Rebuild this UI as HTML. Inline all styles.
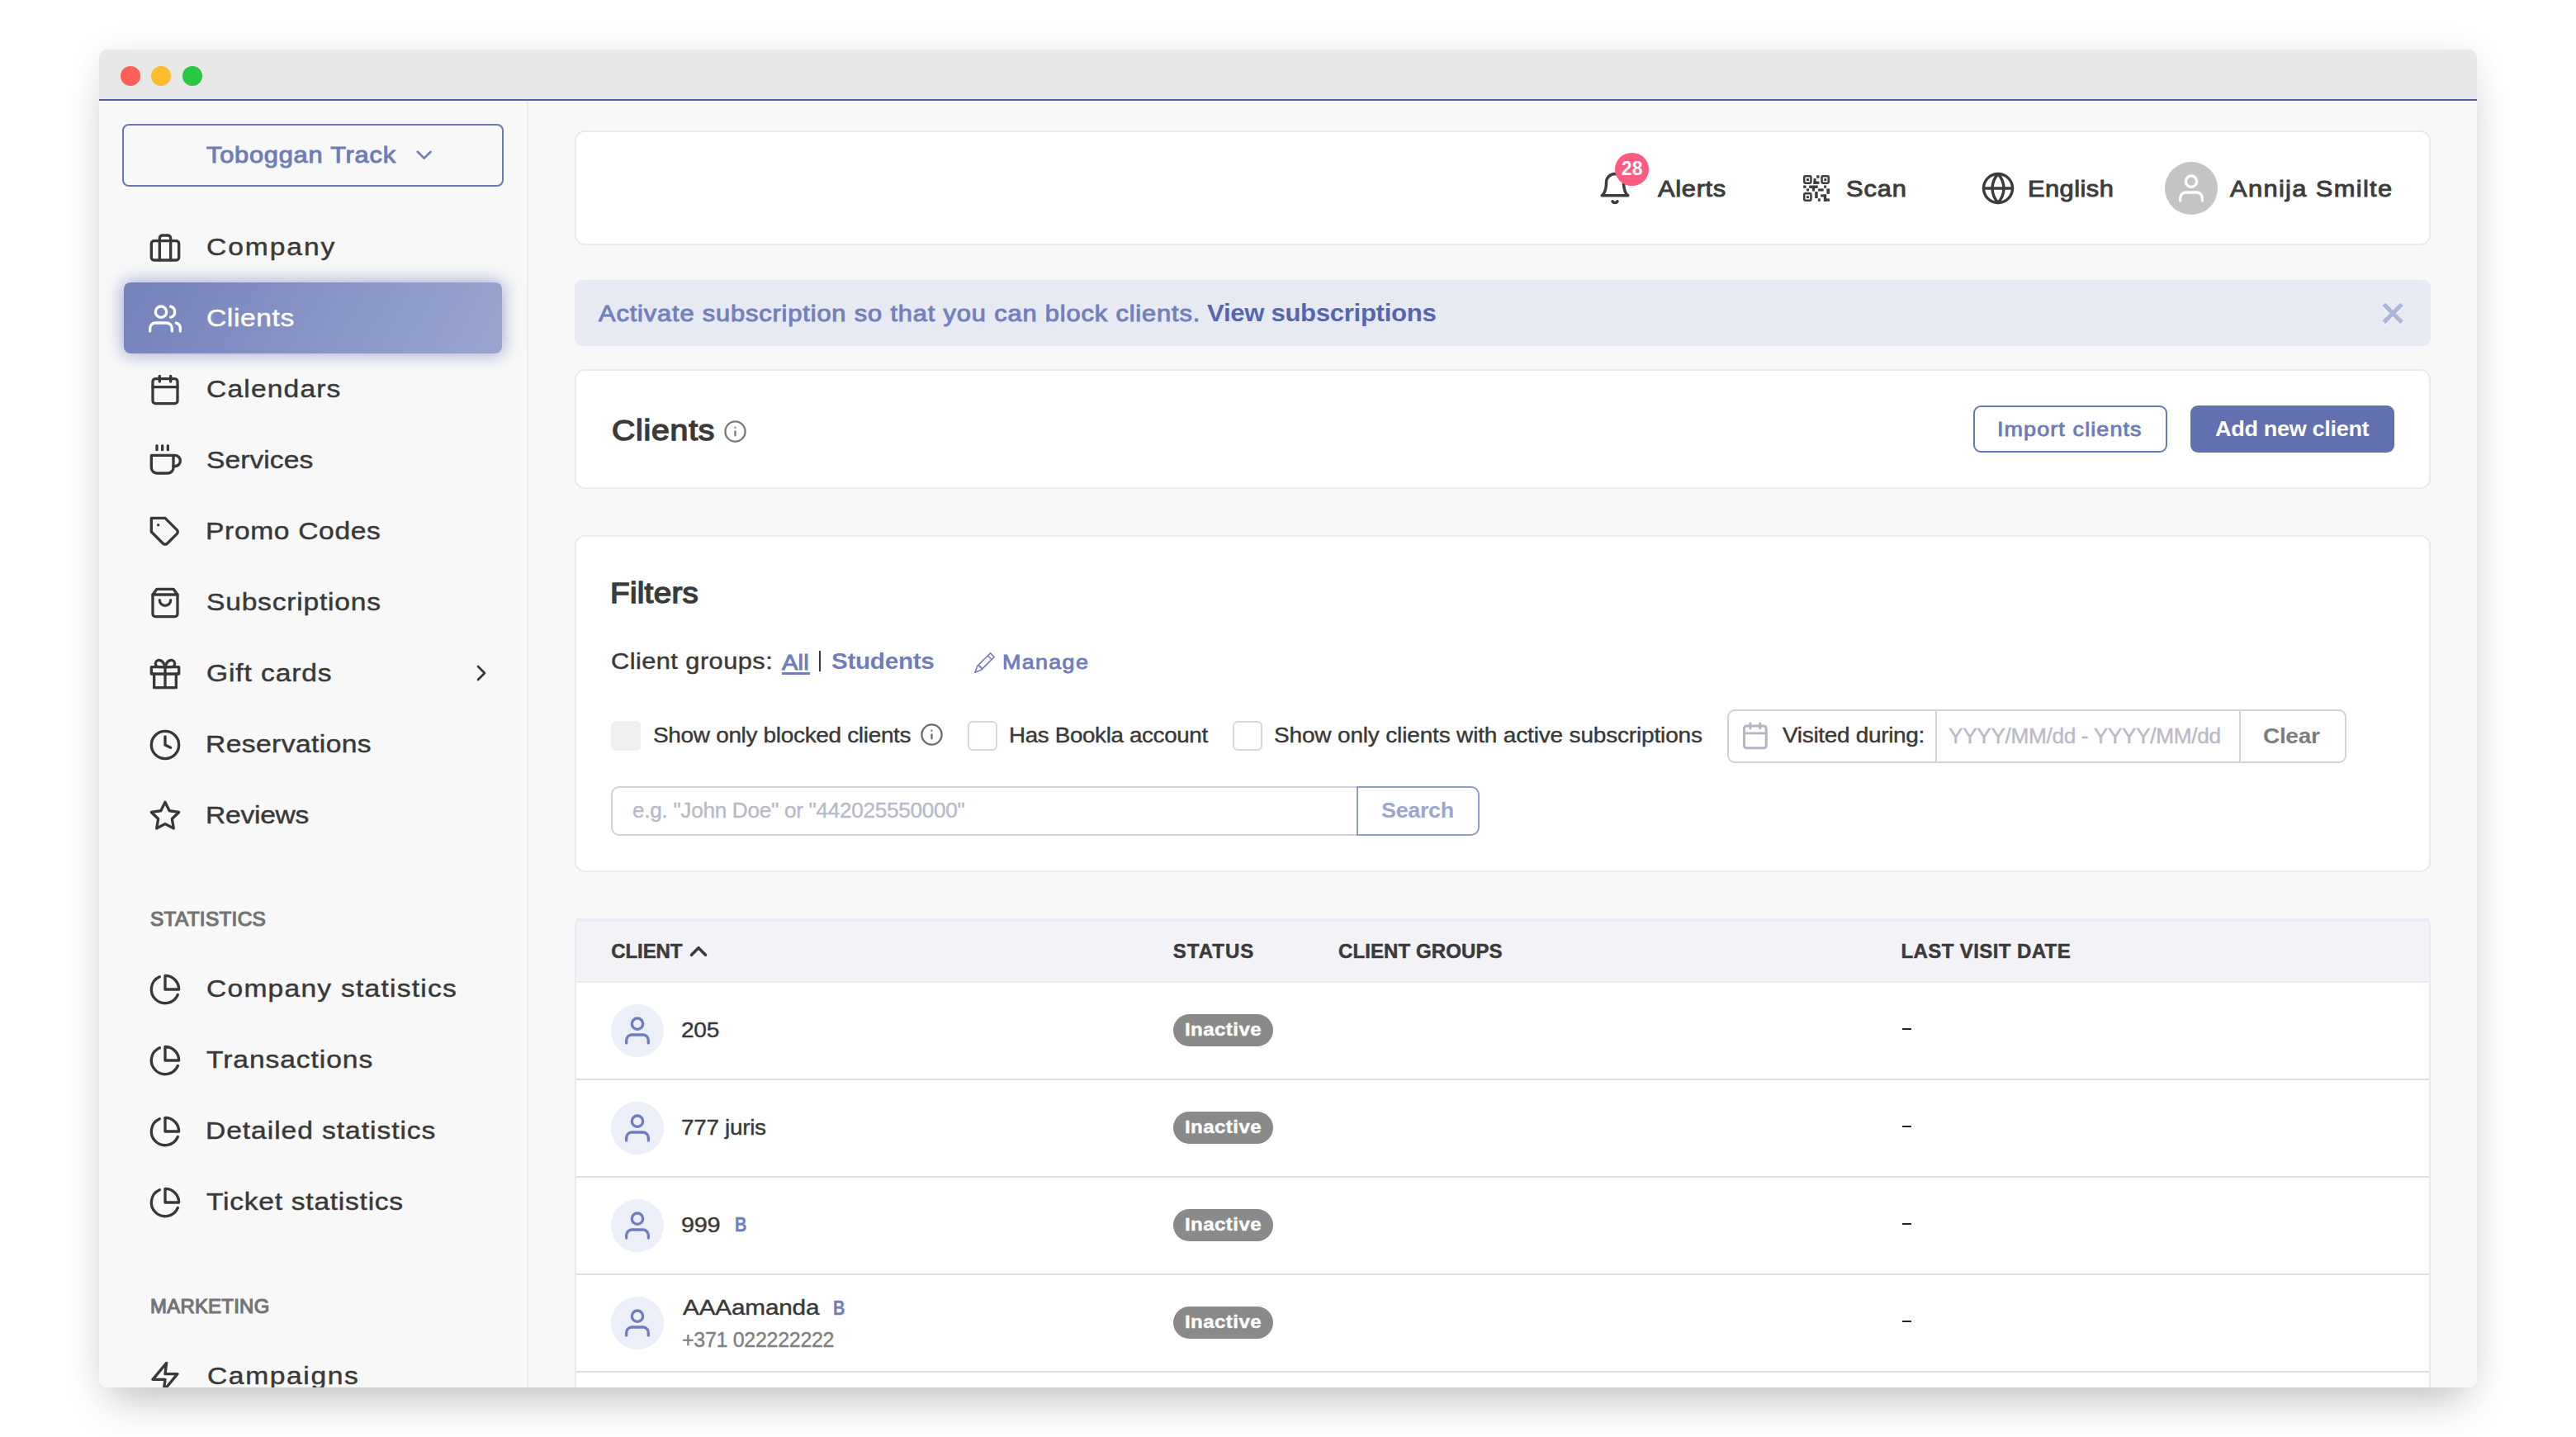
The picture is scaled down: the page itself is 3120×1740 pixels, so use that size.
<!DOCTYPE html>
<html><head><meta charset="utf-8"><title>Clients</title>
<style>
html,body{margin:0;padding:0;}
body{width:3120px;height:1740px;overflow:hidden;background:#fff;position:relative;font-family:"Liberation Sans",sans-serif;}
#shadow{position:absolute;left:120px;top:60px;width:2880px;height:1620px;border-radius:9px;background:#f8f8f8;box-shadow:0 30px 50px -14px rgba(0,0,0,.21),0 0 40px rgba(0,0,0,.065);}
#win{position:absolute;left:120px;top:60px;width:2880px;height:62px;border-radius:9px 9px 0 0;overflow:hidden;}
#win .b{position:absolute;}
.b{position:absolute;}
.i{position:absolute;overflow:visible;}
.t{position:absolute;white-space:pre;line-height:1;transform-origin:0 0;display:block;}
#clip{position:absolute;left:120px;top:60px;width:2880px;height:1620px;border-radius:9px;overflow:hidden;}
#clip > #inner{position:absolute;left:-120px;top:-60px;width:3120px;height:1740px;}
</style></head><body>
<div id="shadow"></div>
<div id="clip"><div id="inner">
<div id="win">
<div class="b" style="left:0px;top:0px;width:2880px;height:60px;background:#e8e8e8;"></div>
<div class="b" style="left:0px;top:60px;width:2880px;height:2px;background:#4f5cb0;"></div>
<div class="b" style="left:25.5px;top:20px;width:24px;height:24px;background:#fe5f57;border-radius:50%;"></div>
<div class="b" style="left:63.2px;top:20px;width:24px;height:24px;background:#febc2e;border-radius:50%;"></div>
<div class="b" style="left:100.9px;top:20px;width:24px;height:24px;background:#28c840;border-radius:50%;"></div>
</div>
<div class="b" style="left:638px;top:122px;width:2px;height:1558px;background:#ebeaf4;"></div>
<div class="b" style="left:148px;top:150px;width:462px;height:76px;border:2px solid #6b78b7;border-radius:8px;box-sizing:border-box;"></div>
<span class="t" style="left:250.1px;top:173.7px;font-size:27.5px;font-weight:400;color:#6e7cb8;letter-spacing:0.68px;transform:scaleX(1.1200);-webkit-text-stroke:0.94px #6e7cb8;">Toboggan Track</span>
<svg class="i" style="left:498.3px;top:172.4px;" width="31.4" height="31.4" viewBox="0 0 24 24" fill="none" stroke="#6e7cb8" stroke-width="2" stroke-linecap="round" stroke-linejoin="round"><polyline points="6 9 12 15 18 9"/></svg>
<svg class="i" style="left:180px;top:280.0px;" width="40" height="40" viewBox="0 0 24 24" fill="none" stroke="#383838" stroke-width="2" stroke-linecap="round" stroke-linejoin="round"><rect x="2" y="7" width="20" height="14" rx="2" ry="2"/><path d="M16 21V5a2 2 0 0 0-2-2h-4a2 2 0 0 0-2 2v16"/></svg>
<span class="t" style="left:250.0px;top:284.1px;font-size:30px;font-weight:400;color:#383838;letter-spacing:1.72px;transform:scaleX(1.1200);-webkit-text-stroke:0.45px #383838;">Company</span>
<div class="b" style="left:150px;top:342px;width:458px;height:86px;border-radius:8px;background:linear-gradient(118deg,#7481bb,#9aa5cf);box-shadow:0 0 20px 2px rgba(110,123,184,.6);"></div>
<svg class="i" style="left:180px;top:366.0px;" width="40" height="40" viewBox="0 0 24 24" fill="none" stroke="#fff" stroke-width="2" stroke-linecap="round" stroke-linejoin="round"><path d="M17 21v-2a4 4 0 0 0-4-4H5a4 4 0 0 0-4 4v2"/><circle cx="9" cy="7" r="4"/><path d="M23 21v-2a4 4 0 0 0-3-3.87"/><path d="M16 3.13a4 4 0 0 1 0 7.75"/></svg>
<span class="t" style="left:250.0px;top:370.1px;font-size:30px;font-weight:400;color:#fff;letter-spacing:0.54px;transform:scaleX(1.1200);-webkit-text-stroke:0.45px #fff;">Clients</span>
<svg class="i" style="left:180px;top:452.0px;" width="40" height="40" viewBox="0 0 24 24" fill="none" stroke="#383838" stroke-width="2" stroke-linecap="round" stroke-linejoin="round"><rect x="3" y="4" width="18" height="18" rx="2" ry="2"/><line x1="16" y1="2" x2="16" y2="6"/><line x1="8" y1="2" x2="8" y2="6"/><line x1="3" y1="10" x2="21" y2="10"/></svg>
<span class="t" style="left:250.0px;top:456.1px;font-size:30px;font-weight:400;color:#383838;letter-spacing:1.03px;transform:scaleX(1.1200);-webkit-text-stroke:0.45px #383838;">Calendars</span>
<svg class="i" style="left:180px;top:538.0px;" width="40" height="40" viewBox="0 0 24 24" fill="none" stroke="#383838" stroke-width="2" stroke-linecap="round" stroke-linejoin="round"><path d="M18 8h1a4 4 0 0 1 0 8h-1"/><path d="M2 8h16v9a4 4 0 0 1-4 4H6a4 4 0 0 1-4-4V8z"/><line x1="6" y1="1" x2="6" y2="4"/><line x1="10" y1="1" x2="10" y2="4"/><line x1="14" y1="1" x2="14" y2="4"/></svg>
<span class="t" style="left:250.0px;top:542.1px;font-size:30px;font-weight:400;color:#383838;letter-spacing:0.05px;transform:scaleX(1.1200);-webkit-text-stroke:0.45px #383838;">Services</span>
<svg class="i" style="left:180px;top:624.0px;" width="40" height="40" viewBox="0 0 24 24" fill="none" stroke="#383838" stroke-width="2" stroke-linecap="round" stroke-linejoin="round"><path d="M20.59 13.41l-7.17 7.17a2 2 0 0 1-2.83 0L2 12V2h10l8.59 8.59a2 2 0 0 1 0 2.82z"/><line x1="7" y1="7" x2="7.01" y2="7"/></svg>
<span class="t" style="left:249.0px;top:628.1px;font-size:30px;font-weight:400;color:#383838;letter-spacing:0.58px;transform:scaleX(1.1200);-webkit-text-stroke:0.45px #383838;">Promo Codes</span>
<svg class="i" style="left:180px;top:710.0px;" width="40" height="40" viewBox="0 0 24 24" fill="none" stroke="#383838" stroke-width="2" stroke-linecap="round" stroke-linejoin="round"><path d="M6 2L3 6v14a2 2 0 0 0 2 2h14a2 2 0 0 0 2-2V6l-3-4z"/><line x1="3" y1="6" x2="21" y2="6"/><path d="M16 10a4 4 0 0 1-8 0"/></svg>
<span class="t" style="left:250.0px;top:714.1px;font-size:30px;font-weight:400;color:#383838;letter-spacing:0.69px;transform:scaleX(1.1200);-webkit-text-stroke:0.45px #383838;">Subscriptions</span>
<svg class="i" style="left:180px;top:796.0px;" width="40" height="40" viewBox="0 0 24 24" fill="none" stroke="#383838" stroke-width="2" stroke-linecap="round" stroke-linejoin="round"><polyline points="20 12 20 22 4 22 4 12"/><rect x="2" y="7" width="20" height="5"/><line x1="12" y1="22" x2="12" y2="7"/><path d="M12 7H7.5a2.5 2.5 0 0 1 0-5C11 2 12 7 12 7z"/><path d="M12 7h4.5a2.5 2.5 0 0 0 0-5C13 2 12 7 12 7z"/></svg>
<span class="t" style="left:250.0px;top:800.1px;font-size:30px;font-weight:400;color:#383838;letter-spacing:0.78px;transform:scaleX(1.1200);-webkit-text-stroke:0.45px #383838;">Gift cards</span>
<svg class="i" style="left:567px;top:799.2px;" width="32" height="32" viewBox="0 0 24 24" fill="none" stroke="#383838" stroke-width="2" stroke-linecap="round" stroke-linejoin="round"><polyline points="9 18 15 12 9 6"/></svg>
<svg class="i" style="left:180px;top:882.0px;" width="40" height="40" viewBox="0 0 24 24" fill="none" stroke="#383838" stroke-width="2" stroke-linecap="round" stroke-linejoin="round"><circle cx="12" cy="12" r="10"/><polyline points="12 6 12 12 16 14"/></svg>
<span class="t" style="left:249.0px;top:886.1px;font-size:30px;font-weight:400;color:#383838;letter-spacing:0.37px;transform:scaleX(1.1200);-webkit-text-stroke:0.45px #383838;">Reservations</span>
<svg class="i" style="left:180px;top:968.0px;" width="40" height="40" viewBox="0 0 24 24" fill="none" stroke="#383838" stroke-width="2" stroke-linecap="round" stroke-linejoin="round"><polygon points="12 2 15.09 8.26 22 9.27 17 14.14 18.18 21.02 12 17.77 5.82 21.02 7 14.14 2 9.27 8.91 8.26 12 2"/></svg>
<span class="t" style="left:249.0px;top:972.1px;font-size:30px;font-weight:400;color:#383838;letter-spacing:-0.23px;transform:scaleX(1.1200);-webkit-text-stroke:0.45px #383838;">Reviews</span>
<span class="t" style="left:181.5px;top:1101.0px;font-size:24px;font-weight:400;color:#747474;letter-spacing:0.30px;transform:scaleX(1.0143);-webkit-text-stroke:1.20px #747474;">STATISTICS</span>
<span class="t" style="left:182.3px;top:1569.9px;font-size:24px;font-weight:400;color:#747474;letter-spacing:0.30px;transform:scaleX(0.9940);-webkit-text-stroke:1.20px #747474;">MARKETING</span>
<svg class="i" style="left:180px;top:1177.5px;" width="40" height="40" viewBox="0 0 24 24" fill="none" stroke="#383838" stroke-width="2" stroke-linecap="round" stroke-linejoin="round"><path d="M21.21 15.89A10 10 0 1 1 8 2.83"/><path d="M22 12A10 10 0 0 0 12 2v10z"/></svg>
<span class="t" style="left:250.0px;top:1182.1px;font-size:30px;font-weight:400;color:#383838;letter-spacing:1.09px;transform:scaleX(1.1200);-webkit-text-stroke:0.45px #383838;">Company statistics</span>
<svg class="i" style="left:180px;top:1263.5px;" width="40" height="40" viewBox="0 0 24 24" fill="none" stroke="#383838" stroke-width="2" stroke-linecap="round" stroke-linejoin="round"><path d="M21.21 15.89A10 10 0 1 1 8 2.83"/><path d="M22 12A10 10 0 0 0 12 2v10z"/></svg>
<span class="t" style="left:250.0px;top:1268.1px;font-size:30px;font-weight:400;color:#383838;letter-spacing:0.82px;transform:scaleX(1.1200);-webkit-text-stroke:0.45px #383838;">Transactions</span>
<svg class="i" style="left:180px;top:1349.5px;" width="40" height="40" viewBox="0 0 24 24" fill="none" stroke="#383838" stroke-width="2" stroke-linecap="round" stroke-linejoin="round"><path d="M21.21 15.89A10 10 0 1 1 8 2.83"/><path d="M22 12A10 10 0 0 0 12 2v10z"/></svg>
<span class="t" style="left:249.0px;top:1354.1px;font-size:30px;font-weight:400;color:#383838;letter-spacing:0.84px;transform:scaleX(1.1200);-webkit-text-stroke:0.45px #383838;">Detailed statistics</span>
<svg class="i" style="left:180px;top:1435.5px;" width="40" height="40" viewBox="0 0 24 24" fill="none" stroke="#383838" stroke-width="2" stroke-linecap="round" stroke-linejoin="round"><path d="M21.21 15.89A10 10 0 1 1 8 2.83"/><path d="M22 12A10 10 0 0 0 12 2v10z"/></svg>
<span class="t" style="left:250.0px;top:1440.1px;font-size:30px;font-weight:400;color:#383838;letter-spacing:0.65px;transform:scaleX(1.1200);-webkit-text-stroke:0.45px #383838;">Ticket statistics</span>
<svg class="i" style="left:180px;top:1647px;" width="40" height="40" viewBox="0 0 24 24" fill="none" stroke="#383838" stroke-width="2" stroke-linecap="round" stroke-linejoin="round"><polygon points="13 2 3 14 12 14 11 22 21 10 12 10 13 2"/></svg>
<span class="t" style="left:251.0px;top:1650.6px;font-size:30px;font-weight:400;color:#383838;letter-spacing:1.43px;transform:scaleX(1.1200);-webkit-text-stroke:0.45px #383838;">Campaigns</span>
<div class="b" style="left:696px;top:158px;width:2248px;height:139px;background:#fff;border:2px solid #ebe9f5;border-radius:12px;box-sizing:border-box;"></div>
<svg class="i" style="left:1934.5px;top:207px;" width="42" height="42" viewBox="0 0 24 24" fill="none" stroke="#3c3c3c" stroke-width="2" stroke-linecap="round" stroke-linejoin="round"><path d="M18 8A6 6 0 0 0 6 8c0 7-3 9-3 9h18s-3-2-3-9"/><path d="M13.73 21a2 2 0 0 1-3.46 0"/></svg>
<div class="b" style="left:1956.3px;top:185px;width:40.7px;height:40.2px;background:#fd5c80;border-radius:50%;"></div>
<span class="t" style="left:1963.7px;top:193.3px;font-size:23px;font-weight:700;color:#fff;letter-spacing:0.21px;transform:scaleX(1.0000);">28</span>
<span class="t" style="left:2007.5px;top:214.7px;font-size:27.5px;font-weight:400;color:#3c3c3c;letter-spacing:0.63px;transform:scaleX(1.1200);-webkit-text-stroke:0.94px #3c3c3c;">Alerts</span>
<span class="t" style="left:2236.1px;top:214.7px;font-size:27.5px;font-weight:400;color:#3c3c3c;letter-spacing:0.77px;transform:scaleX(1.1200);-webkit-text-stroke:0.94px #3c3c3c;">Scan</span>
<svg class="i" style="left:2399px;top:207px;" width="42" height="42" viewBox="0 0 24 24" fill="none" stroke="#3c3c3c" stroke-width="2" stroke-linecap="round" stroke-linejoin="round"><circle cx="12" cy="12" r="10"/><line x1="2" y1="12" x2="22" y2="12"/><path d="M12 2a15.3 15.3 0 0 1 4 10 15.3 15.3 0 0 1-4 10 15.3 15.3 0 0 1-4-10 15.3 15.3 0 0 1 4-10z"/></svg>
<span class="t" style="left:2456.3px;top:214.7px;font-size:27.5px;font-weight:400;color:#3c3c3c;letter-spacing:0.41px;transform:scaleX(1.1200);-webkit-text-stroke:0.94px #3c3c3c;">English</span>
<div class="b" style="left:2622px;top:196px;width:64px;height:64px;background:#c4c4c4;border-radius:50%;"></div>
<svg class="i" style="left:2634px;top:208px;" width="40" height="40" viewBox="0 0 24 24" fill="none" stroke="#fff" stroke-width="2" stroke-linecap="round" stroke-linejoin="round"><path d="M20 21v-2a4 4 0 0 0-4-4H8a4 4 0 0 0-4 4v2"/><circle cx="12" cy="7" r="4"/></svg>
<span class="t" style="left:2700.8px;top:214.7px;font-size:27.5px;font-weight:400;color:#3c3c3c;letter-spacing:1.22px;transform:scaleX(1.1200);-webkit-text-stroke:0.94px #3c3c3c;">Annija Smilte</span>
<svg class="i" style="left:2184px;top:212px" width="32" height="32" viewBox="0 0 32 32" fill="#3c3c3c"><rect x="1.25" y="1.25" width="8.2" height="8.4" rx="1.2" fill="none" stroke="#3c3c3c" stroke-width="2.5"/><rect x="4.0" y="4.1" width="2.9" height="2.9"/><rect x="22.55" y="1.25" width="8.2" height="8.4" rx="1.2" fill="none" stroke="#3c3c3c" stroke-width="2.5"/><rect x="25.3" y="4.1" width="2.9" height="2.9"/><rect x="1.25" y="22.35" width="8.2" height="8.4" rx="1.2" fill="none" stroke="#3c3c3c" stroke-width="2.5"/><rect x="4.0" y="25.200000000000003" width="2.9" height="2.9"/><rect x="16.2" y="0.3" width="3.3" height="3.4"/><rect x="12.5" y="4.1" width="3.1" height="6.8"/><rect x="12.5" y="7.6" width="7.0" height="3.3"/><rect x="0.2" y="12.5" width="3.3" height="3.3"/><rect x="4.1" y="16.4" width="2.9" height="3.1"/><rect x="7.2" y="12.5" width="10.5" height="3.5"/><rect x="10.9" y="16" width="3.1" height="3.5"/><rect x="25.1" y="12.5" width="3.0" height="3.3"/><rect x="18.1" y="16.4" width="6.6" height="3.1"/><rect x="28.4" y="16.4" width="3.6" height="6.4"/><rect x="14.2" y="20.1" width="3.5" height="8.0"/><rect x="17.9" y="28.4" width="2.9" height="3.4"/><rect x="21.2" y="23.4" width="6.9" height="3.1"/><rect x="24.9" y="23.4" width="3.2" height="8.4"/><rect x="24.9" y="28.4" width="7.1" height="3.4"/></svg>
<div class="b" style="left:696px;top:339px;width:2248px;height:80px;background:#e7eaf3;border-radius:9px;"></div>
<span class="t" style="left:724.8px;top:365.7px;font-size:27.5px;font-weight:400;color:#7280bc;letter-spacing:0.76px;transform:scaleX(1.1200);-webkit-text-stroke:0.94px #7280bc;">Activate subscription so that you can block clients.</span>
<span class="t" style="left:1461.7px;top:364.5px;font-size:29px;font-weight:700;color:#5665af;letter-spacing:-0.30px;transform:scaleX(1.0736);">View subscriptions</span>
<svg class="i" style="left:2880px;top:360px" width="40" height="40" viewBox="0 0 40 40" fill="none" stroke-width="5.2"><g stroke="#f7f8fc" transform="translate(0,1.6)"><line x1="7.3" y1="8.5" x2="29.100" y2="30.300"/><line x1="29.100" y1="8.500" x2="7.300" y2="30.300"/></g><g stroke="#adb6d8"><line x1="7.3" y1="8.5" x2="29.100" y2="30.300"/><line x1="29.100" y1="8.500" x2="7.300" y2="30.300"/></g></svg>
<div class="b" style="left:696px;top:447px;width:2248px;height:145px;background:#fff;border:2px solid #ebe9f5;border-radius:12px;box-sizing:border-box;"></div>
<span class="t" style="left:740.8px;top:502.9px;font-size:35px;font-weight:400;color:#3a3a3a;letter-spacing:0.69px;transform:scaleX(1.1200);-webkit-text-stroke:1.40px #3a3a3a;">Clients</span>
<svg class="i" style="left:875.5px;top:507.5px;" width="29" height="29" viewBox="0 0 24 24" fill="none" stroke="#7a7a7a" stroke-width="1.9" stroke-linecap="round" stroke-linejoin="round"><circle cx="12" cy="12" r="10"/><line x1="12" y1="16" x2="12" y2="12"/><line x1="12" y1="8" x2="12.01" y2="8"/></svg>
<div class="b" style="left:2390px;top:491px;width:235px;height:57px;border:2px solid #6b78b7;border-radius:9px;box-sizing:border-box;background:#fff;"></div>
<span class="t" style="left:2419.0px;top:507.7px;font-size:24px;font-weight:400;color:#6e7bb8;letter-spacing:1.01px;transform:scaleX(1.1200);-webkit-text-stroke:0.82px #6e7bb8;">Import clients</span>
<div class="b" style="left:2653px;top:491px;width:247px;height:57px;background:#6270b0;border-radius:9px;"></div>
<span class="t" style="left:2682.8px;top:506.8px;font-size:25px;font-weight:700;color:#fff;letter-spacing:-0.30px;transform:scaleX(1.0817);">Add new client</span>
<div class="b" style="left:696px;top:648px;width:2248px;height:408px;background:#fff;border:2px solid #ebe9f5;border-radius:12px;box-sizing:border-box;"></div>
<span class="t" style="left:739.3px;top:700.8px;font-size:34.5px;font-weight:400;color:#3a3a3a;letter-spacing:0.25px;transform:scaleX(1.1200);-webkit-text-stroke:1.38px #3a3a3a;">Filters</span>
<span class="t" style="left:740.4px;top:786.7px;font-size:27.5px;font-weight:400;color:#383838;letter-spacing:0.39px;transform:scaleX(1.1200);-webkit-text-stroke:0.41px #383838;">Client groups:</span>
<span class="t" style="left:946.6px;top:789.0px;font-size:26px;font-weight:400;color:#6f7dba;letter-spacing:0.18px;transform:scaleX(1.1200);-webkit-text-stroke:0.88px #6f7dba;">All</span>
<div class="b" style="left:946.5px;top:814.3px;width:34px;height:2.4px;background:#6f7dba;"></div>
<div class="b" style="left:991.8px;top:787.5px;width:2.7px;height:25.5px;background:#3a3a3a;"></div>
<span class="t" style="left:1006.5px;top:788.1px;font-size:27px;font-weight:700;color:#6f7dba;letter-spacing:-0.30px;transform:scaleX(1.1005);">Students</span>
<span class="t" style="left:1213.8px;top:789.7px;font-size:24px;font-weight:400;color:#6f7dba;letter-spacing:1.20px;transform:scaleX(1.1200);-webkit-text-stroke:0.82px #6f7dba;">Manage</span>
<svg class="i" style="left:1179.5px;top:789.5px" width="25" height="25" viewBox="0 0 16 16" fill="#6f7dba"><path d="M12.146.146a.5.5 0 0 1 .708 0l3 3a.5.5 0 0 1 0 .708l-10 10a.5.5 0 0 1-.168.11l-5 2a.5.5 0 0 1-.65-.65l2-5a.5.5 0 0 1 .11-.168l10-10zM11.207 2.5 13.500 4.793 14.793 3.500 12.500 1.207 11.207 2.500zm1.586 3L10.500 3.207 4 9.707V10h.5a.5.5 0 0 1 .5.5v.5h.5a.5.5 0 0 1 .5.5v.5h.293l6.500-6.500zm-9.761 5.175-.106.106-1.528 3.821 3.821-1.528.106-.106A.5.5 0 0 1 5 12.500V12h-.5a.5.5 0 0 1-.5-.5V11h-.5a.5.5 0 0 1-.468-.325z"/></svg>
<div class="b" style="left:740px;top:873px;width:36px;height:36px;background:#efefef;border-radius:6px;"></div>
<span class="t" style="left:790.9px;top:878.1px;font-size:25px;font-weight:400;color:#383838;letter-spacing:-0.30px;transform:scaleX(1.1200);-webkit-text-stroke:0.38px #383838;">Show only blocked clients</span>
<svg class="i" style="left:1113.5px;top:874.5px;" width="29" height="29" viewBox="0 0 24 24" fill="none" stroke="#6a6a6a" stroke-width="1.9" stroke-linecap="round" stroke-linejoin="round"><circle cx="12" cy="12" r="10"/><line x1="12" y1="16" x2="12" y2="12"/><line x1="12" y1="8" x2="12.01" y2="8"/></svg>
<div class="b" style="left:1172px;top:873px;width:36px;height:36px;background:#fff;border:2px solid #d8d6e4;border-radius:6px;box-sizing:border-box;"></div>
<span class="t" style="left:1222.4px;top:878.1px;font-size:25px;font-weight:400;color:#383838;letter-spacing:-0.30px;transform:scaleX(1.1100);-webkit-text-stroke:0.38px #383838;">Has Bookla account</span>
<div class="b" style="left:1493px;top:873px;width:36px;height:36px;background:#fff;border:2px solid #d8d6e4;border-radius:6px;box-sizing:border-box;"></div>
<span class="t" style="left:1543.4px;top:878.1px;font-size:25px;font-weight:400;color:#383838;letter-spacing:-0.15px;transform:scaleX(1.1200);-webkit-text-stroke:0.38px #383838;">Show only clients with active subscriptions</span>
<div class="b" style="left:2092px;top:859px;width:750px;height:65px;background:#fff;border:2px solid #d2d1dd;border-radius:9px;box-sizing:border-box;"></div>
<div class="b" style="left:2344.2px;top:859px;width:1.8px;height:65px;background:#d2d1dd;"></div>
<div class="b" style="left:2711.8px;top:859px;width:1.8px;height:65px;background:#d2d1dd;"></div>
<svg class="i" style="left:2108px;top:873px;" width="35.7" height="35.7" viewBox="0 0 24 24" fill="none" stroke="#b5b4c4" stroke-width="2" stroke-linecap="round" stroke-linejoin="round"><rect x="3" y="4" width="18" height="18" rx="2" ry="2"/><line x1="16" y1="2" x2="16" y2="6"/><line x1="8" y1="2" x2="8" y2="6"/><line x1="3" y1="10" x2="21" y2="10"/></svg>
<span class="t" style="left:2158.7px;top:878.0px;font-size:25px;font-weight:400;color:#383838;letter-spacing:-0.29px;transform:scaleX(1.1200);-webkit-text-stroke:0.38px #383838;">Visited during:</span>
<span class="t" style="left:2360.2px;top:878.6px;font-size:25px;font-weight:400;color:#b9b9c7;letter-spacing:-0.30px;transform:scaleX(1.0467);-webkit-text-stroke:0.38px #b9b9c7;">YYYY/MM/dd - YYYY/MM/dd</span>
<span class="t" style="left:2740.9px;top:878.6px;font-size:25px;font-weight:700;color:#7d7d7d;letter-spacing:-0.28px;transform:scaleX(1.1200);">Clear</span>
<div class="b" style="left:740px;top:952px;width:905px;height:60px;background:#fff;border:2px solid #d2d1dd;border-radius:10px 0 0 10px;box-sizing:border-box;"></div>
<div class="b" style="left:1643px;top:952px;width:149px;height:60px;background:#fff;border:2px solid #8f9bcb;border-radius:0 10px 10px 0;box-sizing:border-box;"></div>
<span class="t" style="left:765.9px;top:968.8px;font-size:25px;font-weight:400;color:#b9b9c7;letter-spacing:-0.30px;transform:scaleX(1.0474);-webkit-text-stroke:0.38px #b9b9c7;">e.g. "John Doe" or "442025550000"</span>
<span class="t" style="left:1673.0px;top:968.8px;font-size:25px;font-weight:700;color:#9aa5d3;letter-spacing:-0.30px;transform:scaleX(1.0771);">Search</span>
<div class="b" style="left:696px;top:1112px;width:2248px;height:568px;background:#fff;border:2px solid #e9e8f3;border-bottom:none;border-radius:9px 9px 0 0;box-sizing:border-box;overflow:hidden;"></div>
<div class="b" style="left:698px;top:1114px;width:2244px;height:74px;background:#f3f2f7;border-radius:7px 7px 0 0;"></div>
<div class="b" style="left:698px;top:1112px;width:2244px;height:4px;background:#ebe9f4;"></div>
<div class="b" style="left:698px;top:1188px;width:2244px;height:2px;background:#ebe9f3;"></div>
<span class="t" style="left:740.2px;top:1140.0px;font-size:24px;font-weight:700;color:#3a3a3a;letter-spacing:-0.07px;transform:scaleX(1.0000);-webkit-text-stroke:0.5px #3a3a3a;">CLIENT</span>
<svg class="i" style="left:829.2px;top:1135.3px;" width="34" height="34" viewBox="0 0 24 24" fill="none" stroke="#3a3a3a" stroke-width="2.5" stroke-linecap="round" stroke-linejoin="round"><polyline points="18 15 12 9 6 15"/></svg>
<span class="t" style="left:1420.7px;top:1140.0px;font-size:24px;font-weight:700;color:#3a3a3a;letter-spacing:1.03px;transform:scaleX(1.0000);-webkit-text-stroke:0.5px #3a3a3a;">STATUS</span>
<span class="t" style="left:1621.0px;top:1140.0px;font-size:24px;font-weight:700;color:#3a3a3a;letter-spacing:0.10px;transform:scaleX(1.0000);-webkit-text-stroke:0.5px #3a3a3a;">CLIENT GROUPS</span>
<span class="t" style="left:2302.5px;top:1140.0px;font-size:24px;font-weight:700;color:#3a3a3a;letter-spacing:0.40px;transform:scaleX(1.0000);-webkit-text-stroke:0.5px #3a3a3a;">LAST VISIT DATE</span>
<div class="b" style="left:698px;top:1306px;width:2244px;height:2px;background:#dedee1;"></div>
<div class="b" style="left:740px;top:1216px;width:64px;height:64px;background:#eceef8;border-radius:50%;"></div>
<svg class="i" style="left:752px;top:1227.5px;" width="40" height="40" viewBox="0 0 24 24" fill="none" stroke="#6f7dba" stroke-width="2" stroke-linecap="round" stroke-linejoin="round"><path d="M20 21v-2a4 4 0 0 0-4-4H8a4 4 0 0 0-4 4v2"/><circle cx="12" cy="7" r="4"/></svg>
<span class="t" style="left:825.4px;top:1233.6px;font-size:26.5px;font-weight:400;color:#383838;letter-spacing:-0.30px;transform:scaleX(1.0610);-webkit-text-stroke:0.40px #383838;">205</span>
<div class="b" style="left:1421px;top:1228px;width:121px;height:39px;background:#8a8a8a;border-radius:20px;"></div>
<span class="t" style="left:1435.0px;top:1236.6px;font-size:21.5px;font-weight:700;color:#fff;letter-spacing:0.37px;transform:scaleX(1.1200);-webkit-text-stroke:0.4px #fff;">Inactive</span>
<div class="b" style="left:2304px;top:1245px;width:11px;height:2.3px;background:#222;border-radius:0.5px;"></div>
<div class="b" style="left:698px;top:1424px;width:2244px;height:2px;background:#dedee1;"></div>
<div class="b" style="left:740px;top:1334px;width:64px;height:64px;background:#eceef8;border-radius:50%;"></div>
<svg class="i" style="left:752px;top:1345.5px;" width="40" height="40" viewBox="0 0 24 24" fill="none" stroke="#6f7dba" stroke-width="2" stroke-linecap="round" stroke-linejoin="round"><path d="M20 21v-2a4 4 0 0 0-4-4H8a4 4 0 0 0-4 4v2"/><circle cx="12" cy="7" r="4"/></svg>
<span class="t" style="left:825.4px;top:1351.6px;font-size:26.5px;font-weight:400;color:#383838;letter-spacing:-0.30px;transform:scaleX(1.0533);-webkit-text-stroke:0.40px #383838;">777 juris</span>
<div class="b" style="left:1421px;top:1346px;width:121px;height:39px;background:#8a8a8a;border-radius:20px;"></div>
<span class="t" style="left:1435.0px;top:1354.6px;font-size:21.5px;font-weight:700;color:#fff;letter-spacing:0.37px;transform:scaleX(1.1200);-webkit-text-stroke:0.4px #fff;">Inactive</span>
<div class="b" style="left:2304px;top:1363px;width:11px;height:2.3px;background:#222;border-radius:0.5px;"></div>
<div class="b" style="left:698px;top:1542px;width:2244px;height:2px;background:#dedee1;"></div>
<div class="b" style="left:740px;top:1452px;width:64px;height:64px;background:#eceef8;border-radius:50%;"></div>
<svg class="i" style="left:752px;top:1463.5px;" width="40" height="40" viewBox="0 0 24 24" fill="none" stroke="#6f7dba" stroke-width="2" stroke-linecap="round" stroke-linejoin="round"><path d="M20 21v-2a4 4 0 0 0-4-4H8a4 4 0 0 0-4 4v2"/><circle cx="12" cy="7" r="4"/></svg>
<span class="t" style="left:825.4px;top:1469.6px;font-size:26.5px;font-weight:400;color:#383838;letter-spacing:-0.30px;transform:scaleX(1.0905);-webkit-text-stroke:0.40px #383838;">999</span>
<span class="t" style="left:890.3px;top:1471.3px;font-size:24.5px;font-weight:700;color:#6f7dba;letter-spacing:0.00px;transform:scaleX(0.8141);-webkit-text-stroke:0.3px #6f7dba;">B</span>
<div class="b" style="left:1421px;top:1464px;width:121px;height:39px;background:#8a8a8a;border-radius:20px;"></div>
<span class="t" style="left:1435.0px;top:1472.6px;font-size:21.5px;font-weight:700;color:#fff;letter-spacing:0.37px;transform:scaleX(1.1200);-webkit-text-stroke:0.4px #fff;">Inactive</span>
<div class="b" style="left:2304px;top:1481px;width:11px;height:2.3px;background:#222;border-radius:0.5px;"></div>
<div class="b" style="left:698px;top:1660px;width:2244px;height:2px;background:#dedee1;"></div>
<div class="b" style="left:740px;top:1570px;width:64px;height:64px;background:#eceef8;border-radius:50%;"></div>
<svg class="i" style="left:752px;top:1581.5px;" width="40" height="40" viewBox="0 0 24 24" fill="none" stroke="#6f7dba" stroke-width="2" stroke-linecap="round" stroke-linejoin="round"><path d="M20 21v-2a4 4 0 0 0-4-4H8a4 4 0 0 0-4 4v2"/><circle cx="12" cy="7" r="4"/></svg>
<span class="t" style="left:825.9px;top:1609.6px;font-size:25px;font-weight:400;color:#808080;letter-spacing:-0.30px;transform:scaleX(1.0001);-webkit-text-stroke:0.38px #808080;">+371 022222222</span>
<span class="t" style="left:826.9px;top:1570.4px;font-size:26.5px;font-weight:400;color:#383838;letter-spacing:-0.13px;transform:scaleX(1.1200);-webkit-text-stroke:0.40px #383838;">AAAamanda</span>
<span class="t" style="left:1008.7px;top:1572.1px;font-size:24.5px;font-weight:700;color:#6f7dba;letter-spacing:0.00px;transform:scaleX(0.8141);-webkit-text-stroke:0.3px #6f7dba;">B</span>
<div class="b" style="left:1421px;top:1582px;width:121px;height:39px;background:#8a8a8a;border-radius:20px;"></div>
<span class="t" style="left:1435.0px;top:1590.6px;font-size:21.5px;font-weight:700;color:#fff;letter-spacing:0.37px;transform:scaleX(1.1200);-webkit-text-stroke:0.4px #fff;">Inactive</span>
<div class="b" style="left:2304px;top:1599px;width:11px;height:2.3px;background:#222;border-radius:0.5px;"></div>
</div></div>
</body></html>
